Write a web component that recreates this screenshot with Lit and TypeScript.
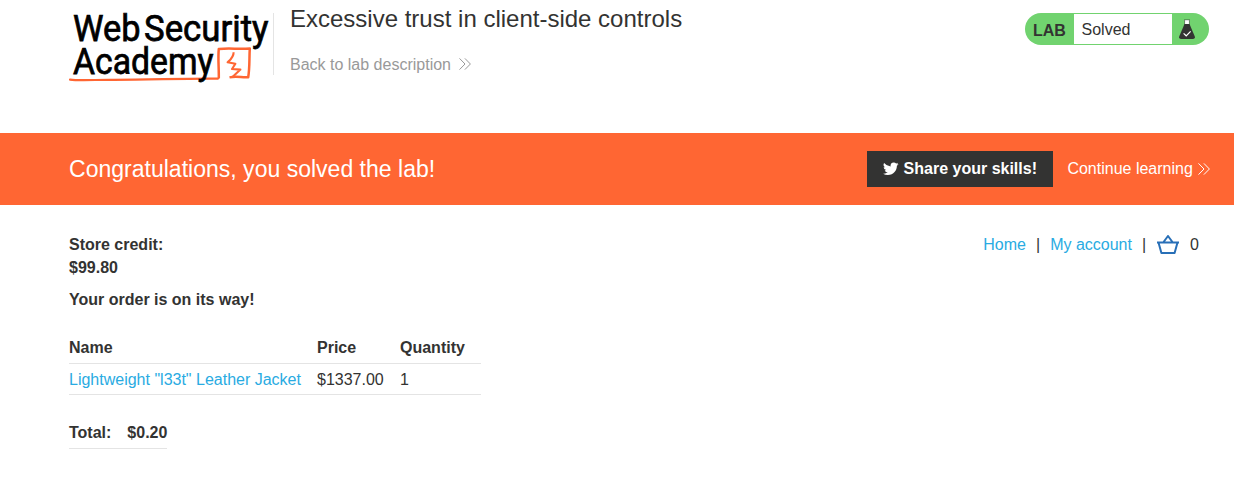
import { LitElement, html, svg, css } from "lit";
import { customElement } from "lit/decorators.js";

const chevrons = html`<svg class="chev" viewBox="0 0 12 12" width="12" height="12">
  <path d="M0.5 0.4 L6 6 L0.5 11.6 M5.9 0.4 L11.4 6 L5.9 11.6" fill="none" stroke="currentColor" stroke-width="1" />
</svg>`;

const orangeMark = svg`
  <path d="M1 79.6 C8 80.6 20 80 40 79.8 C80 80 112 78.2 149 78.6" fill="none" stroke="#ff6633" stroke-width="2.2" stroke-linecap="round" />
  <path d="M149.8 78.6 C150 68 148.8 58 149.8 49 C160 47.8 170 49.4 180.8 48.4 C180.2 58 180.8 68 179.2 77.2 C173 77.8 168 75.8 160.5 77.4" fill="none" stroke="#ff6633" stroke-width="2.5" stroke-linejoin="round" />
  <path d="M164.6 52.2 C164.8 57 161.6 59.5 158.6 62.3 L166.4 63.8 L163 69 L171.4 69.6 L163.7 76.8" fill="none" stroke="#ff6633" stroke-width="2.1" stroke-linejoin="round" />`;

@customElement("app-root")
export class AppRoot extends LitElement {
  static styles = css`
    :host {
      display: block;
      height: 487px;
      overflow: hidden;
      background: #fff;
      color: #333332;
      font: 16px/23px "Liberation Sans", Arial, sans-serif;
    }
    a { color: #29abe2; text-decoration: none; }
    svg { display: block; flex: none; }
    .header { display: flex; height: 133px; padding: 0 25px 0 69px; box-sizing: border-box; }
    .logo { width: 204px; height: 90px; overflow: visible; }
    .logo text { font-family: Roboto, sans-serif; font-weight: 400; font-size: 37.2px; fill: #000; stroke: #000; stroke-width: 0.75px; }
    .titles { margin-top: 13px; border-left: 1px solid #e4e4e4; height: 62px; padding-left: 16px; flex: 1; }
    .title { margin: -8px 0 0; font-size: 24px; line-height: 28px; font-weight: 400; }
    .back { display: flex; align-items: center; gap: 8.5px; margin-top: 20px; color: #999; }
    .back .chev { margin-bottom: 2px; }
    .status { display: flex; margin-top: 13px; width: 184px; height: 32px; box-sizing: border-box; border-radius: 16px; background: #71d36f; padding: 1px 0; }
    .lab { width: 49px; box-sizing: border-box; padding-left: 8px; font-weight: 700; line-height: 33px; }
    .state { width: 98px; box-sizing: border-box; padding-left: 7.5px; background: #fff; line-height: 31px; }
    .flask { margin: 5px 0 0 7px; }
    .banner { display: flex; align-items: center; height: 72px; box-sizing: border-box; padding: 0 24.5px 0 69px; background: #ff6633; color: #fff; }
    .congrats { flex: 1; font-size: 23.04px; line-height: 28px; }
    .share { display: flex; align-items: center; gap: 5px; width: 186px; height: 36px; box-sizing: border-box; padding-left: 16px; background: #333332; color: #fff; font-weight: 700; margin-right: 14.3px; }
    .share span, .next span { line-height: 22px; padding-bottom: 1px; }
    .next { display: flex; align-items: center; gap: 4.7px; height: 24px; color: #fff; }
    .main { padding: 28px 35px 0 69px; }
    .top { display: flex; justify-content: space-between; align-items: flex-start; }
    .credit { font-weight: 700; }
    .nav { display: flex; gap: 10px; align-items: center; height: 23px; }
    .order { margin: 9px 0 22px; font-weight: 700; }
    .items { display: grid; grid-template-columns: 248px 83px 81px; width: 412px; height: 31px; border-bottom: 1px solid #e4e4e4; box-sizing: border-box; }
    .head { font-weight: 700; }
    .head .cell { padding-top: 3px; }
    .row .cell { line-height: 31px; }
    .total { display: flex; width: max-content; gap: 16px; margin-top: 26px; height: 27px; font-weight: 700; border-bottom: 1px solid #e4e4e4; }
  `;

  render() {
    return html`
      <header class="header">
        <svg class="logo" viewBox="0 0 204 90">
          ${orangeMark}
          <text x="4" y="41.1" textLength="67.5" lengthAdjust="spacingAndGlyphs">Web</text>
          <text x="75" y="41.1" textLength="124.5" lengthAdjust="spacingAndGlyphs">Security</text>
          <text x="4" y="74" textLength="140.5" lengthAdjust="spacingAndGlyphs">Academy</text>
        </svg>
        <div class="titles">
          <h2 class="title">Excessive trust in client-side controls</h2>
          <div class="back">Back to lab description ${chevrons}</div>
        </div>
        <div class="status">
          <span class="lab">LAB</span>
          <span class="state">Solved</span>
          <svg class="flask" width="16" height="21" viewBox="0 0 16 21">
            <path d="M5 1 H11 L10.2 2 V6 H5.8 V2 Z" fill="#fff" />
            <path d="M5 0.8 H11 M5.6 1 V6 M10.4 1 V6" stroke="#333332" stroke-width="0.5" fill="none" />
            <path d="M5.5 5 H10.5 L15.8 17.4 Q16.3 20 14 20 H2 Q-0.3 20 0.2 17.4 Z" fill="#333332" />
            <path d="M4.6 14.4 L7.2 16.8 L11.6 12.4" fill="none" stroke="#fff" stroke-width="1.2" />
          </svg>
        </div>
      </header>
      <section class="banner">
        <div class="congrats">Congratulations, you solved the lab!</div>
        <a class="share">
          <svg width="15.5" height="15.5" viewBox="0 0 24 24">
            <path fill="#fff" d="M24 4.6a10 10 0 0 1-2.8.8 5 5 0 0 0 2.2-2.7 10 10 0 0 1-3.1 1.2 4.9 4.9 0 0 0-8.4 4.5A14 14 0 0 1 1.700 3.200a4.900 4.900 0 0 0 1.500 6.600 4.900 4.900 0 0 1-2.200-.6v.1a4.900 4.900 0 0 0 3.900 4.800 5 5 0 0 1-2.200.1 4.900 4.900 0 0 0 4.600 3.400A9.900 9.900 0 0 1 0 19.600 14 14 0 0 0 7.500 21.800c9.100 0 14-7.500 14-14v-.6A10 10 0 0 0 24 4.600z" />
          </svg>
          <span>Share your skills!</span>
        </a>
        <a class="next"><span>Continue learning</span>${chevrons}</a>
      </section>
      <main class="main">
        <div class="top">
          <div class="credit"><div>Store credit:</div><div>$99.80</div></div>
          <nav class="nav">
            <a>Home</a><span>|</span><a>My account</a><span>|</span>
            <svg width="24" height="20" viewBox="0 0 24 20">
              <path d="M1 7.500 H23 M2.500 7.500 L5.400 18 H18.600 L21.500 7.500 M7.200 7.500 L12 1 L16.800 7.500" fill="none" stroke="#286fb7" stroke-width="2" stroke-linejoin="round" />
            </svg>
            <span>0</span>
          </nav>
        </div>
        <div class="order">Your order is on its way!</div>
        <div class="items head">
          <span class="cell">Name</span><span class="cell">Price</span><span class="cell">Quantity</span>
        </div>
        <div class="items row">
          <span class="cell"><a>Lightweight "l33t" Leather Jacket</a></span><span class="cell">$1337.00</span><span class="cell">1</span>
        </div>
        <div class="total"><span>Total:</span><span>$0.20</span></div>
      </main>
    `;
  }
}
